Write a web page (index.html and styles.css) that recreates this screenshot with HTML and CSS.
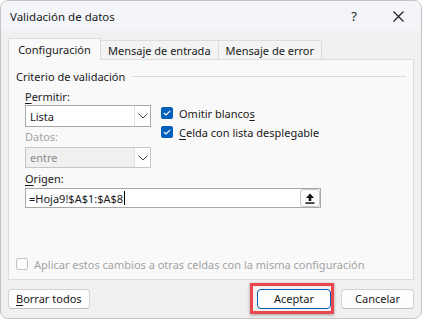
FILE: index.html
```html
<!DOCTYPE html>
<html lang="es">
<head>
<meta charset="UTF-8" />
<title>Validación de datos</title>
<link rel="stylesheet" href="styles.css">
</head>
<body>

  <div class="window">
    <!-- Barra de título -->
    <div class="titlebar">
      <span class="title">Validación de datos</span>
      <span class="help">?</span>
      <span class="close">
        <svg width="11" height="11" viewBox="0 0 11 11"><path d="M0.5 0.5 L10.5 10.5 M10.5 0.5 L0.5 10.5" stroke="#1a1a1a" stroke-width="1.1" fill="none"/></svg>
      </span>
    </div>

    <div class="dialog-body">
      <!-- Pestañas -->
      <div class="tabs">
        <div class="tab active">Configuración</div>
        <div class="tab">Mensaje de entrada</div>
        <div class="tab">Mensaje de error</div>
      </div>

      <div class="panel">
        <div class="group-title"><span>Criterio de validación</span><i></i></div>

        <div class="criteria">
          <div class="col-left">
            <div class="field-label"><u>P</u>ermitir:</div>
            <div class="select">
              <span class="value">Lista</span>
              <span class="arrow"><svg width="10" height="6" viewBox="0 0 10 6"><path d="M0.5 0.5 L5 5 L9.5 0.5" stroke="#444" stroke-width="1" fill="none"/></svg></span>
            </div>
            <div class="field-label disabled">Datos:</div>
            <div class="select disabled">
              <span class="value">entre</span>
              <span class="arrow"><svg width="10" height="6" viewBox="0 0 10 6"><path d="M0.5 0.5 L5 5 L9.5 0.5" stroke="#444" stroke-width="1" fill="none"/></svg></span>
            </div>
          </div>
          <div class="col-right">
            <div class="check">
              <span class="box checked"><svg width="8" height="6" viewBox="0 0 8 6"><path d="M0.8 3 L3 5 L7.2 0.8" stroke="#fff" stroke-width="1.1" fill="none"/></svg></span>
              <span>Omitir blanco<u>s</u></span>
            </div>
            <div class="check">
              <span class="box checked"><svg width="8" height="6" viewBox="0 0 8 6"><path d="M0.8 3 L3 5 L7.2 0.8" stroke="#fff" stroke-width="1.1" fill="none"/></svg></span>
              <span><u>C</u>elda con lista desplegable</span>
            </div>
          </div>
        </div>

        <div class="field-label origin-label"><u>O</u>rigen:</div>
        <div class="text-input">
          <span class="value">=Hoja9!$A$1:$A$8<span class="caret"></span></span>
          <span class="collapse-btn">
            <svg width="10" height="11" viewBox="0 0 10 11"><path d="M5 0.5 L9 5 L6.3 5 L6.3 8 L3.7 8 L3.7 5 L1 5 Z" fill="#111"/><rect x="0.5" y="9.3" width="9" height="1.5" fill="#111"/></svg>
          </span>
        </div>

        <div class="check apply disabled">
          <span class="box"></span>
          <span>Aplicar estos cambios a otras celdas con la misma configuración</span>
        </div>
      </div>

      <!-- Botones -->
      <div class="footer">
        <button class="btn"><u>B</u>orrar todos</button>
        <div class="right-buttons">
          <button class="btn default">Aceptar<span class="highlight"></span></button>
          <button class="btn">Cancelar</button>
        </div>
      </div>
    </div>
  </div>

</body>
</html>
```

FILE: styles.css
```css
:root {
  --texto: #1a1a1a;
  --gris: #a3a3a3;
  --azul: #005fb8;
  --borde: #cfcfcf;
}

* {
  margin: 0;
  padding: 0;
  box-sizing: border-box;
  font-family: 'Noto Sans', sans-serif;
}

body {
  background: #ffffff;
  color: var(--texto);
  font-size: 11px;
}

u {
  text-decoration: underline;
  text-underline-offset: 2px;
}

.window {
  width: 422px;
  height: 319px;
  border: 1px solid #c4c4c4;
  border-radius: 8px;
  overflow: hidden;
  background: #f0f0f0;
  display: flex;
  flex-direction: column;
}

/* Barra de título */
.titlebar {
  height: 30px;
  background: #f3f5f8;
  display: flex;
  align-items: center;
  padding: 0 0 0 9px;
}

.title {
  flex: 1;
  font-size: 11.5px;
}

.help {
  font-size: 13px;
  width: 50px;
  text-align: center;
}

.close {
  width: 42px;
  display: flex;
  justify-content: center;
  padding-right: 4px;
}

.dialog-body {
  flex: 1;
  padding: 7px 7px 0;
  display: flex;
  flex-direction: column;
}

/* Pestañas */
.tabs {
  display: flex;
  align-items: flex-end;
  height: 21px;
  position: relative;
  z-index: 1;
}

.tab {
  height: 19px;
  padding: 0 7px;
  border: 1px solid #dcdcdc;
  border-bottom: none;
  margin-left: -1px;
  background: #f3f3f3;
  display: flex;
  align-items: center;
}

.tab.active {
  height: 22px;
  width: 93px;
  justify-content: center;
  margin-left: 0;
  margin-bottom: -1px;
  background: #f9f9f9;
  padding: 0;
  z-index: 2;
}

.panel {
  height: 221px;
  border: 1px solid #dcdcdc;
  background: #f9f9f9;
  padding: 8px 7px 7px;
  display: flex;
  flex-direction: column;
}

.group-title {
  display: flex;
  align-items: center;
  height: 16px;
  gap: 7px;
}

.group-title i {
  flex: 1;
  border-top: 1px solid #dcdcdc;
}

.criteria {
  display: flex;
  gap: 10px;
  padding-left: 9px;
  margin-top: 5px;
}

.col-left {
  width: 126px;
}

.field-label {
  height: 16px;
  line-height: 16px;
}

.field-label.disabled {
  color: var(--gris);
  margin-top: 2px;
}

.select {
  height: 22px;
  border: 1px solid #a9a9a9;
  background: #fff;
  display: flex;
  align-items: stretch;
}

.select.disabled {
  height: 21px;
  margin-top: 2px;
  border-color: #c6c6c6;
  background: #f0f0f0;
  color: #8a8a8a;
}

.select .value {
  flex: 1;
  padding-left: 4px;
  display: flex;
  align-items: center;
}

.select .arrow {
  width: 16px;
  border-left: 1px solid #e2e2e2;
  background: #fff;
  display: flex;
  align-items: center;
  justify-content: center;
}

.col-right {
  padding-top: 16px;
  display: flex;
  flex-direction: column;
  gap: 3px;
}

.check {
  display: flex;
  align-items: center;
  gap: 6px;
  height: 16px;
}

.box {
  width: 12px;
  height: 12px;
  border-radius: 2px;
  border: 1px solid #8a8a8a;
  background: #fff;
  display: flex;
  align-items: center;
  justify-content: center;
}

.box.checked {
  background: var(--azul);
  border-color: var(--azul);
}

.origin-label {
  margin: 3px 0 1px 9px;
}

.text-input {
  margin-left: 9px;
  width: 296px;
  height: 20px;
  border: 1px solid #a9a9a9;
  background: #fff;
  display: flex;
  align-items: center;
}

.text-input .value {
  flex: 1;
  padding-left: 3px;
  display: flex;
  align-items: center;
}

.caret {
  display: inline-block;
  width: 1px;
  height: 14px;
  background: #000;
  margin-left: 1px;
}

.collapse-btn {
  width: 20px;
  height: 18px;
  border: 1px solid #c8c8c8;
  border-radius: 3px;
  background: #fbfbfb;
  display: flex;
  align-items: center;
  justify-content: center;
}

.check.apply {
  margin-top: auto;
  color: var(--gris);
}

.check.apply .box {
  border-color: #c2c2c2;
  background: #fbfbfb;
}

/* Botones */
.footer {
  flex: 1;
  display: flex;
  align-items: center;
  justify-content: space-between;
  padding-bottom: 1px;
}

.right-buttons {
  display: flex;
  gap: 10px;
}

.btn {
  position: relative;
  height: 20px;
  min-width: 73px;
  padding: 0 7px;
  font-size: 11px;
  color: var(--texto);
  background: #fdfdfd;
  border: 1px solid #d3d3d3;
  border-bottom-color: #bdbdbd;
  border-radius: 4px;
}

.btn.default {
  width: 74px;
  border: 1px solid var(--azul);
}

/* Marca roja alrededor de Aceptar */
.highlight {
  position: absolute;
  left: -8px;
  right: -4px;
  top: -7px;
  bottom: -6px;
  border: 3px solid #e9474d;
  box-shadow: 0 1px 3px rgba(0,0,0,0.35);
}
```
